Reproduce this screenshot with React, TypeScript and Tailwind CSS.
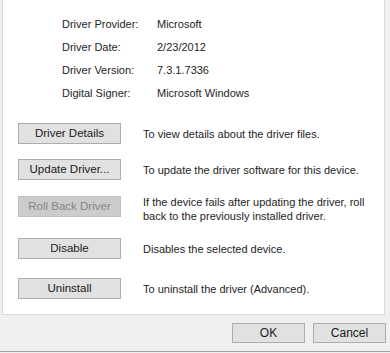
import React from "react";

const info = [
  ["Driver Provider:", "Microsoft"],
  ["Driver Date:", "2/23/2012"],
  ["Driver Version:", "7.3.1.7336"],
  ["Digital Signer:", "Microsoft Windows"],
];

function WinButton({
  label,
  disabled = false,
  className = "",
}: {
  label: string;
  disabled?: boolean;
  className?: string;
}) {
  return (
    <button
      type="button"
      disabled={disabled}
      className={
        (disabled
          ? "border-[#bfbfbf] bg-[#cccccc] text-[#858585] "
          : "border-[#adadad] bg-[#e1e1e1] text-[#1a1a1a] ") +
        "flex shrink-0 items-center justify-center border leading-none " +
        className
      }
    >
      {label}
    </button>
  );
}

export default function App() {
  return (
    <div
      className="flex h-[353px] w-[390px] flex-col bg-[#f0f0f0] text-[11px] text-[#1e1e1e]"
      style={{ fontFamily: '"Liberation Sans", Arial, sans-serif' }}
    >
      {/* driver tab panel */}
      <div className="ml-[2px] h-[315px] w-[383px] border-x border-b border-[#d9d9d9] bg-white">
        <div className="flex flex-col pl-[59px] pt-[13px]">
          {info.map(([label, value]) => (
            <div key={label} className="flex h-[23px] items-center">
              <span className="w-[95px]">{label}</span>
              <span>{value}</span>
            </div>
          ))}
        </div>

        <div className="flex flex-col pl-[15px]">
          <div className="mt-[18px] flex h-[21px] items-center gap-[22px]">
            <WinButton label="Driver Details" className="h-[21px] w-[103px] text-[11.5px]" />
            <span className="pt-px">To view details about the driver files.</span>
          </div>
          <div className="mt-[15px] flex h-[21px] items-center gap-[22px]">
            <WinButton label="Update Driver..." className="h-[21px] w-[103px] text-[11.5px]" />
            <span className="pt-[2px]">To update the driver software for this device.</span>
          </div>
          <div className="mt-[16px] flex h-[21px] items-center gap-[22px]">
            <WinButton label="Roll Back Driver" disabled className="h-[21px] w-[103px] text-[11.5px]" />
            <span className="pt-[5px] leading-[14px]">
              If the device fails after updating the driver, roll
              <br />
              back to the previously installed driver.
            </span>
          </div>
          <div className="mt-[21px] flex h-[21px] items-center gap-[22px]">
            <WinButton label="Disable" className="h-[21px] w-[103px] text-[11.5px]" />
            <span className="pt-px">Disables the selected device.</span>
          </div>
          <div className="mt-[19px] flex h-[21px] items-center gap-[22px]">
            <WinButton label="Uninstall" className="h-[21px] w-[103px] text-[11.5px]" />
            <span className="pt-px">To uninstall the driver (Advanced).</span>
          </div>
        </div>
      </div>

      {/* dialog buttons */}
      <div className="flex justify-end gap-[8px] pr-[4px] pt-[8px]">
        <WinButton label="OK" className="h-[20px] w-[73px] text-[12px]" />
        <WinButton label="Cancel" className="h-[20px] w-[73px] text-[12px]" />
      </div>
      <div className="mt-[8px] h-px w-full bg-[#a0a0a0]" />
    </div>
  );
}
